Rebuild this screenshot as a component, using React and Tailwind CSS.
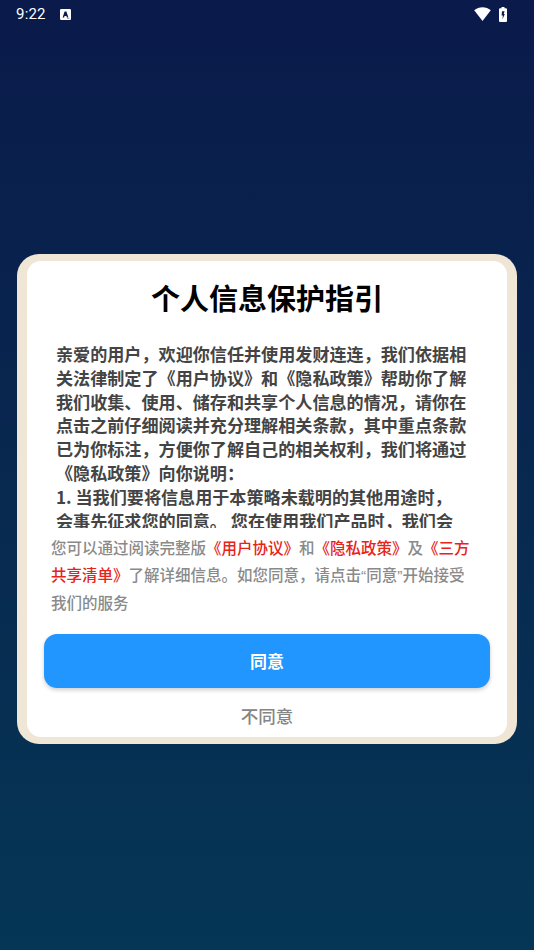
export default function App() {
  return (
    <div className="h-[950px] w-[534px] overflow-hidden flex flex-col bg-gradient-to-b from-[#0a1a4a] to-[#053655] font-['Noto_Sans_CJK_SC','Noto_Sans',sans-serif] [text-spacing-trim:space-all]">
      <div className="h-12 shrink-0 flex items-start justify-between pl-4 pr-[27px] pt-[4px]">
        <div className="flex items-center h-5 gap-[14px]">
          <span className="text-white text-[15px] font-['Roboto',sans-serif] leading-5 tracking-[0.2px]">9:22</span>
          <svg width="11" height="11" viewBox="0 0 11 11">
            <rect x="0" y="0" width="11" height="11" rx="1.2" fill="#fff" />
            <path d="M2.6 8.4 L4.6 2.4 H6.4 L8.4 8.4 H6.9 L6.5 7 H4.5 L4.1 8.4 Z" fill="#0a1a4a" />
            <rect x="7" y="9" width="2.5" height="0.8" fill="#8a94ad" />
          </svg>
        </div>
        <div className="flex items-center h-5 gap-[8px]">
          <svg width="17" height="14" viewBox="0 0 17 14">
            <path d="M0.2 3.2 C4.8 -0.8 12.2 -0.8 16.8 3.2 L8.5 14 Z" fill="#fff" />
          </svg>
          <svg width="8" height="15" viewBox="0 0 8 15">
            <path d="M2.5 0 H5.5 V1.2 H7 A1 1 0 0 1 8 2.2 V14 A1 1 0 0 1 7 15 H1 A1 1 0 0 1 0 14 V2.2 A1 1 0 0 1 1 1.2 H2.5 Z" fill="#fff" />
            <path d="M3 4.2 H5.6 L4.7 7 H5.8 L3.4 12.4 L3.9 8.4 H2.6 Z" fill="#0a1a4a" />
          </svg>
        </div>
      </div>
      <div className="flex-1 flex items-center justify-center">
        <div className="w-[500px] h-[490px] rounded-[22px] bg-[#f0e6d6] px-[10px] py-[7px]">
          <div className="h-full rounded-[14px] bg-white flex flex-col">
            <h1 className="mt-[16px] text-center text-[29px] leading-[40px] font-bold text-black">个人信息保护指引</h1>
            <div className="mt-[25px] ml-[29px] mr-[30px] h-[186px] overflow-hidden text-[17.1px] leading-[23.8px] font-bold text-[#444444]">
              亲爱的用户，欢迎你信任并使用发财连连，我们依据相关法律制定了《用户协议》和《隐私政策》帮助你了解我们收集、使用、储存和共享个人信息的情况，请你在点击之前仔细阅读并充分理解相关条款，其中重点条款已为你标注，方便你了解自己的相关权利，我们将通过《隐私政策》向你说明：
              <br />
              1. 当我们要将信息用于本策略未载明的其他用途时，
              <br />
              会事先征求您的同意。 您在使用我们产品时，我们会
            </div>
            <p className="mt-[6px] ml-[24px] mr-[32px] text-[15.5px] leading-[27px] font-medium text-[#8a8a8a]">
              您可以通过阅读完整版<span className="text-[#e8231a]">《用户协议》</span>和<span className="text-[#e8231a]">《隐私政策》</span>及<span className="text-[#e8231a]">《三方共享清单》</span>了解详细信息。如您同意，请点击<span className="font-['Liberation_Sans']">“</span>同意<span className="font-['Liberation_Sans']">”</span>开始接受我们的服务
            </p>
            <button className="mt-[18px] mx-[17px] h-[54px] shrink-0 rounded-[13px] bg-[#2196ff] text-white text-[17px] font-bold shadow-[0_2px_4px_rgba(0,0,0,0.2)]">同意</button>
            <div className="mt-[15px] text-center text-[17.5px] leading-[26px] font-medium text-[#858585]">不同意</div>
          </div>
        </div>
      </div>
    </div>
  );
}
